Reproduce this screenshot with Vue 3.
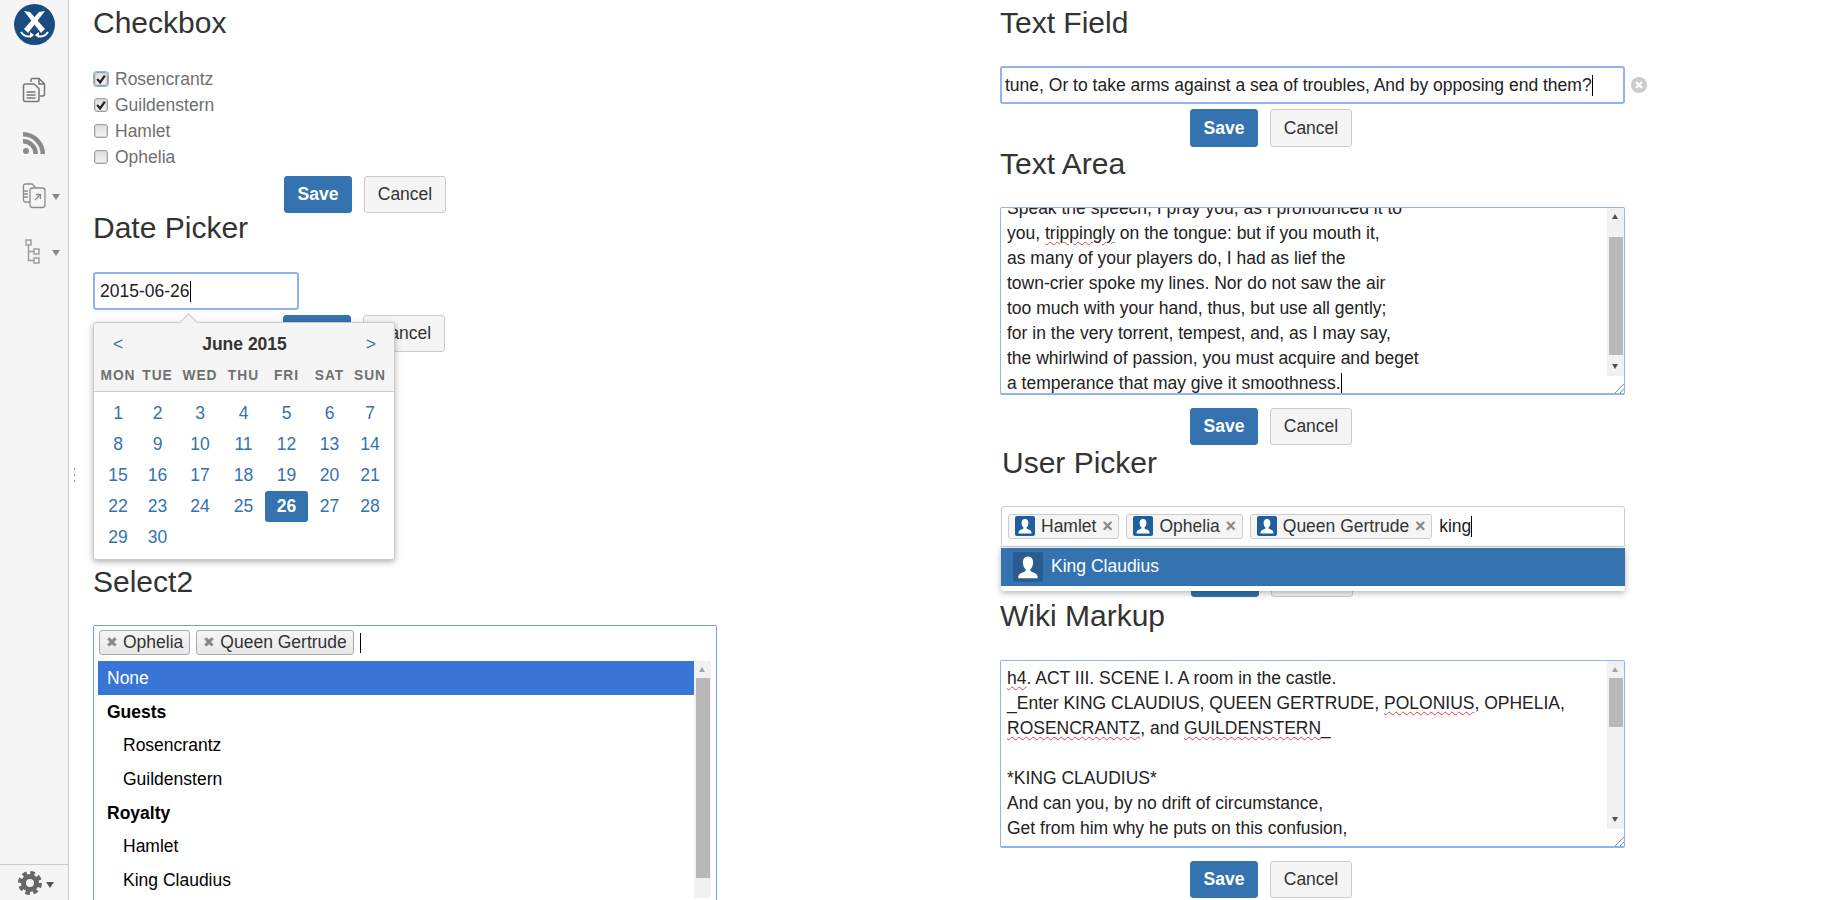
<script setup>
const checks = [
  { label: 'Rosencrantz', on: true, focus: true },
  { label: 'Guildenstern', on: true },
  { label: 'Hamlet', on: false },
  { label: 'Ophelia', on: false }
]
const weekdays = ['MON', 'TUE', 'WED', 'THU', 'FRI', 'SAT', 'SUN']
const days = Array.from({ length: 30 }, (_, i) => i + 1)
const results = [
  { text: 'None', kind: 'active' },
  { text: 'Guests', kind: 'group' },
  { text: 'Rosencrantz', kind: 'child' },
  { text: 'Guildenstern', kind: 'child' },
  { text: 'Royalty', kind: 'group' },
  { text: 'Hamlet', kind: 'child' },
  { text: 'King Claudius', kind: 'child' }
]
const users = ['Hamlet', 'Ophelia', 'Queen Gertrude']
</script>

<template>
  <div class="page">
    <aside class="sidebar">
      <svg class="logo" viewBox="0 0 41 41" width="41" height="41">
        <circle cx="20.5" cy="20.5" r="20.5" fill="#1a4c7f" />
        <path d="M10 7 L16 8 L31 25 L27 29 Z" fill="#fff" />
        <path d="M31 7 L25 8 L10 25 L14 29 Z" fill="#fff" />
        <path d="M7 28 Q12 35 19 31 M34 28 Q29 35 22 31" fill="none" stroke="#fff" stroke-width="2" />
        <path d="M16 28 L20 31 L16 34 Z M25 28 L21 31 L25 34 Z" fill="#fff" />
      </svg>
      <div class="side-icons">
        <div class="side-item">
          <svg viewBox="0 0 24 26" width="24" height="26" fill="none" stroke="#777" stroke-width="1.5">
            <path d="M9 5 V3 Q9 1.5 10.5 1.5 H17 L22.5 7 V17 Q22.5 19 20.5 19 H18" />
            <path d="M17 1.5 V7 H22.5" />
            <path d="M3.5 7 H12 L17 11.5 V22.5 Q17 24.5 15 24.5 H3.5 Q1.5 24.5 1.5 22.5 V9 Q1.5 7 3.5 7 Z" />
            <path d="M4.5 15 H13.5 M4.5 18 H13.5 M4.5 21 H13.5" />
          </svg>
        </div>
        <div class="side-item">
          <svg viewBox="0 0 24 24" width="24" height="24" fill="#8a8a8a">
            <circle cx="4" cy="20" r="3" />
            <path d="M1 8 V12.5 A10.5 10.5 0 0 1 11.5 23 H16 A15 15 0 0 0 1 8 Z" />
            <path d="M1 1 V5.5 A17.5 17.5 0 0 1 18.5 23 H23 A22 22 0 0 0 1 1 Z" />
          </svg>
        </div>
        <div class="side-item caret-item">
          <svg viewBox="0 0 24 26" width="24" height="26" fill="none" stroke="#8c8c8c" stroke-width="1.3">
            <path d="M8 19 H3.5 Q1.5 19 1.5 17 V3 Q1.5 1 3.5 1 H10 L14 5" />
            <path d="M2 8 H6 M2 11 H6 M2 14 H6" />
            <rect x="8" y="5" width="15" height="19.5" rx="2.5" fill="#f5f5f5" />
            <path d="M13 17 L18 12 M14 11.5 H18.5 V16" />
          </svg>
          <i class="tri"></i>
        </div>
        <div class="side-item caret-item">
          <svg viewBox="0 0 24 26" width="24" height="26" fill="none" stroke="#999" stroke-width="1.4">
            <rect x="4" y="1" width="5" height="5" />
            <rect x="12" y="10" width="5" height="5" />
            <rect x="12" y="19" width="5" height="5" />
            <path d="M6.5 6 V21.5 H12 M6.5 12.5 H12" />
          </svg>
          <i class="tri"></i>
        </div>
      </div>
      <div class="side-foot">
        <svg viewBox="0 0 24 24" width="24" height="24">
          <circle cx="12" cy="12" r="10" fill="none" stroke="#666" stroke-width="4" stroke-dasharray="4.5 3.35" />
          <circle cx="12" cy="12" r="6.5" fill="#f5f5f5" stroke="#666" stroke-width="5" />
        </svg>
        <i class="tri dark"></i>
      </div>
    </aside>

    <main class="columns">
      <section class="col col-left">
        <h3>Checkbox</h3>
        <div class="checks">
          <label v-for="c in checks" :key="c.label" class="check">
            <span class="box" :class="{ focused: c.focus }">
              <svg v-if="c.on" viewBox="0 0 14 14" width="12" height="12">
                <path d="M2.500 7 L6 11 L11.500 3" fill="none" stroke="#222" stroke-width="2.6" />
              </svg>
            </span>
            {{ c.label }}
          </label>
        </div>
        <div class="actions tight">
          <button class="save">Save</button><button class="cancel">Cancel</button>
        </div>

        <h3 class="after-tight">Date Picker</h3>
        <div class="date-wrap">
          <div class="field date">2015-06-26<span class="caret"></span></div>
          <div class="calendar">
            <i class="cal-arrow"></i>
            <div class="cal-head">
              <div class="cal-title">
                <span class="nav">&lt;</span>
                <strong>June 2015</strong>
                <span class="nav">&gt;</span>
              </div>
              <div class="cal-grid cal-week">
                <span v-for="w in weekdays" :key="w">{{ w }}</span>
              </div>
            </div>
            <div class="cal-grid cal-days">
              <span v-for="d in days" :key="d" class="day" :class="{ picked: d === 26 }">{{ d }}</span>
            </div>
          </div>
        </div>
        <div class="actions date-actions">
          <button class="save">Save</button><button class="cancel">Cancel</button>
        </div>

        <h3 class="select-title">Select2</h3>
        <div class="select-box">
          <div class="select-pills">
            <span class="pill"><b class="pill-x">✖</b>Ophelia</span>
            <span class="pill"><b class="pill-x">✖</b>Queen Gertrude</span>
            <span class="caret tall"></span>
          </div>
          <div class="select-results">
            <ul class="result-list">
              <li v-for="r in results" :key="r.text" :class="r.kind">{{ r.text }}</li>
            </ul>
            <div class="scrollbar">
              <i class="sb-up"></i>
              <i class="thumb thumb-select"></i>
            </div>
          </div>
        </div>
      </section>

      <section class="col col-right">
        <h3>Text Field</h3>
        <div class="text-row">
          <div class="field text-input">tune, Or to take arms against a sea of troubles, And by opposing end them?<span class="caret"></span></div>
          <svg class="clear" viewBox="0 0 16 16" width="16" height="16">
            <circle cx="8" cy="8" r="8" fill="#ccc" />
            <path d="M5 5 L11 11 M11 5 L5 11" stroke="#fff" stroke-width="2.4" />
          </svg>
        </div>
        <div class="actions tight">
          <button class="save">Save</button><button class="cancel">Cancel</button>
        </div>

        <h3>Text Area</h3>
        <div class="area">
          <div class="area-text area-scrolled">
            <div>Speak the speech, I pray you, as I pronounced it to</div>
            <div>you, <span class="typo">trippingly</span> on the tongue: but if you mouth it,</div>
            <div>as many of your players do, I had as lief the</div>
            <div>town-crier spoke my lines. Nor do not saw the air</div>
            <div>too much with your hand, thus, but use all gently;</div>
            <div>for in the very torrent, tempest, and, as I may say,</div>
            <div>the whirlwind of passion, you must acquire and beget</div>
            <div>a temperance that may give it smoothness.<span class="caret"></span></div>
          </div>
          <div class="scrollbar">
            <i class="sb-up"></i>
            <div class="sb-track"><i class="thumb thumb-area"></i></div>
            <i class="sb-down"></i>
            <i class="resizer"></i>
          </div>
        </div>
        <div class="actions area-actions">
          <button class="save">Save</button><button class="cancel">Cancel</button>
        </div>

        <h3 class="user-title">User Picker</h3>
        <div class="user-wrap">
          <div class="user-box">
            <span v-for="u in users" :key="u" class="user-pill">
              <svg class="avatar" viewBox="0 0 20 20" width="20" height="20">
                <rect width="20" height="20" rx="2" fill="#205f9e" />
                <path d="M10 3 C12.5 3 13.6 5 13.4 7.5 C13.2 9.8 12.2 11 11.5 11.6 C11.5 12.6 12 13 13.5 13.6 C15.5 14.3 16.5 15 16.5 17.5 H3.5 C3.5 15 4.5 14.3 6.500 13.6 C8 13 8.5 12.600 8.5 11.6 C7.800 11 6.800 9.800 6.600 7.500 C6.400 5 7.500 3 10 3 Z" fill="#fff" />
              </svg>
              <span>{{ u }}</span>
              <b class="user-x">×</b>
            </span>
            <span class="typed">king<span class="caret"></span></span>
          </div>
          <div class="user-drop">
            <div class="user-option">
              <svg class="avatar" viewBox="0 0 20 20" width="30" height="30">
                <rect width="20" height="20" rx="1.500" fill="#2a5c8f" />
                <path d="M10 3 C12.5 3 13.6 5 13.4 7.5 C13.2 9.8 12.2 11 11.5 11.6 C11.5 12.6 12 13 13.5 13.6 C15.5 14.3 16.5 15 16.5 17.5 H3.5 C3.5 15 4.5 14.3 6.500 13.6 C8 13 8.5 12.600 8.5 11.6 C7.800 11 6.800 9.800 6.600 7.500 C6.400 5 7.500 3 10 3 Z" fill="#fff" />
              </svg>
              <span class="option-name">King Claudius</span>
            </div>
          </div>
        </div>
        <div class="actions user-actions">
          <button class="save">Save</button><button class="cancel">Cancel</button>
        </div>

        <h3 class="after-user">Wiki Markup</h3>
        <div class="area wiki">
          <div class="area-text wiki-text">
            <div><span class="typo">h4</span>. ACT III. SCENE I. A room in the castle.</div>
            <div>_Enter KING CLAUDIUS, QUEEN GERTRUDE, <span class="typo">POLONIUS</span>, OPHELIA,</div>
            <div><span class="typo">ROSENCRANTZ</span>, and <span class="typo">GUILDENSTERN</span>_</div>
            <div>&nbsp;</div>
            <div>*KING CLAUDIUS*</div>
            <div>And can you, by no drift of circumstance,</div>
            <div>Get from him why he puts on this confusion,</div>
          </div>
          <div class="scrollbar">
            <i class="sb-up"></i>
            <div class="sb-track"><i class="thumb thumb-wiki"></i></div>
            <i class="sb-down"></i>
            <i class="resizer"></i>
          </div>
        </div>
        <div class="actions wiki-actions">
          <button class="save">Save</button><button class="cancel">Cancel</button>
        </div>
      </section>
    </main>
    <i class="drag-handle"></i>
  </div>
</template>

<style>
html, body { margin: 0; height: 100%; overflow: hidden; background: #fff; }
</style>

<style scoped>
.page {
  position: relative;
  display: flex;
  height: 900px;
  overflow: hidden;
  font: 17.5px/25px "Liberation Sans", Arial, sans-serif;
  color: #333;
  background: #fff;
}
.sidebar {
  box-sizing: border-box;
  flex: 0 0 69px;
  height: 900px;
  display: flex;
  flex-direction: column;
  background: #f5f5f5;
  border-right: 1px solid #ccc;
}
.logo { display: block; margin: 4px 0 0 14px; }
.side-icons { flex: 1; display: flex; flex-direction: column; padding-top: 32px; }
.side-item { display: flex; align-items: center; height: 26px; margin-bottom: 27px; padding-left: 22px; }
.caret-item { margin-bottom: 30px; }
.tri {
  display: block;
  width: 0;
  height: 0;
  margin: 2px 0 0 6px;
  border: 4px solid transparent;
  border-top: 6px solid #888;
  border-bottom: 0;
}
.tri.dark { border-top-color: #555; margin: 4px 0 0 4px; }
.side-foot { display: flex; align-items: center; height: 35px; border-top: 1px solid #ccc; padding-left: 18px; margin-right: 0; }

.columns { flex: 1; display: grid; grid-template-columns: 931px 1fr; align-items: start; }
.col { display: flex; flex-direction: column; }
.col-left { padding: 6px 0 0 24px; }
.col-right { padding: 6px 0 0 0; }
h3 { margin: 0; font: 400 30px/33px "Liberation Sans", Arial, sans-serif; color: #333; }

.checks { margin-top: 27px; display: flex; flex-direction: column; }
.check { display: flex; align-items: center; height: 26px; color: #707070; padding-left: 1px; }
.box {
  box-sizing: border-box;
  flex: 0 0 14px;
  height: 14px;
  margin-right: 7px;
  border: 1px solid #a0a0a0;
  border-radius: 3px;
  background: linear-gradient(#dedede, #f4f4f4);
  box-shadow: inset 0 0 0 1px #d4d4d4;
  display: flex;
  align-items: center;
  justify-content: center;
}
.box svg { flex: none; }
.box.focused { box-shadow: 0 0 0 1px #8fb4ee, inset 0 0 0 1px #d4d4d4; }

.actions { display: flex; gap: 12px; padding-left: 191px; height: 37px; }
.tight { margin-top: 6px; }
.col-right .tight { margin-top: 5px; height: 38px; }
.save, .cancel {
  box-sizing: border-box;
  height: 100%;
  margin: 0;
  border-radius: 3px;
  font: 17.5px/25px "Liberation Sans", Arial, sans-serif;
  padding: 0;
}
.save { width: 68px; background: #3572b0; border: 1px solid #3572b0; color: #fff; font-weight: 700; }
.cancel { width: 82px; background: #f5f5f5; border: 1px solid #ccc; color: #333; }
.after-tight { margin-top: -2px; }

.field {
  box-sizing: border-box;
  height: 38px;
  border: 2px solid #8fb4ee;
  border-radius: 3px;
  background: #fff;
  color: #222;
  line-height: 34px;
  white-space: nowrap;
  overflow: hidden;
}
.caret { display: inline-block; width: 1px; height: 21px; background: #000; vertical-align: -5px; }
.date-wrap { position: relative; margin-top: 28px; }
.date { width: 206px; padding-left: 5px; }
.date-actions { margin-top: 5px; padding-left: 190px; }
.calendar {
  box-sizing: border-box;
  position: absolute;
  z-index: 2;
  left: 0;
  top: 50px;
  width: 302px;
  height: 238px;
  background: #fff;
  border: 1px solid #ccc;
  border-radius: 3px;
  box-shadow: 0 2px 6px rgba(0, 0, 0, 0.3);
}
.cal-arrow {
  position: absolute;
  left: 88px;
  top: -7px;
  width: 12px;
  height: 12px;
  background: #f5f5f5;
  border: 1px solid #ccc;
  border-right: 0;
  border-bottom: 0;
  transform: rotate(45deg);
}
.cal-head {
  position: relative;
  height: 68px;
  background: #f5f5f5;
  border-bottom: 1px solid #ccc;
  border-radius: 3px 3px 0 0;
}
.cal-title {
  display: flex;
  justify-content: space-between;
  align-items: center;
  height: 41px;
  padding: 2px 15px 0 16px;
  box-sizing: border-box;
}
.cal-title strong { color: #333; font-weight: 700; }
.nav { color: #3572b0; width: 16px; text-align: center; }
.cal-grid {
  display: grid;
  grid-template-columns: 38px 41px 44px 43px 43px 43px 38px;
  padding-left: 5px;
  text-align: center;
}
.cal-week { font-size: 13.75px; font-weight: 700; color: #707070; letter-spacing: 1px; line-height: 24px; }
.cal-days { margin-top: 6px; grid-auto-rows: 31px; line-height: 31px; }
.day { color: #3572b0; border-radius: 3px; }
.day.picked { background: #3572b0; color: #fff; font-weight: 700; }

.select-title { margin-top: 213px; }
.select-box {
  box-sizing: border-box;
  width: 624px;
  height: 300px;
  margin-top: 27px;
  padding: 4px 5px 0 4px;
  border: 1px solid #6c9ff0;
  border-radius: 2px;
  background: #fff;
}
.select-pills { display: flex; align-items: center; gap: 6px; height: 25px; padding-left: 1px; }
.pill {
  box-sizing: border-box;
  display: flex;
  align-items: center;
  height: 25px;
  padding: 0 6px 0 5px;
  border: 1px solid #aaa;
  border-radius: 3px;
  background: linear-gradient(#f6f6f6, #e8e8e8);
  color: #333;
}
.pill-x { width: 13px; margin-right: 5px; color: #888; font-size: 14px; font-weight: 400; text-align: center; }
.caret.tall { height: 20px; margin-left: 0; }
.select-results { display: flex; margin-top: 6px; }
.result-list { flex: 1; margin: 0; padding: 0; list-style: none; color: #000; }
.result-list li { height: 33.75px; line-height: 33px; padding-left: 9px; }
.result-list .active { background: #3875d7; color: #fff; height: 34px; line-height: 34px; }
.result-list .group { font-weight: 700; line-height: 34px; }
.result-list .child { padding-left: 25px; }

.scrollbar { flex: 0 0 17px; display: flex; flex-direction: column; align-items: center; background: #f1f1f1; }
.sb-up, .sb-down { flex: 0 0 18px; position: relative; width: 17px; }
.sb-up::after, .sb-down::after {
  content: "";
  position: absolute;
  left: 5px;
  top: 6px;
  border: 3.5px solid transparent;
}
.sb-up::after { border-top: 0; border-bottom: 5px solid #505050; }
.sb-down::after { border-bottom: 0; border-top: 5px solid #505050; }
.select-results .sb-up::after { border-bottom-color: #a3a3a3; }
.wiki .sb-up::after { border-bottom-color: #a3a3a3; }
.sb-track { flex: 1; width: 100%; }
.thumb { display: block; width: 14px; background: #b8b8b8; margin: 0 auto; }
.thumb-select { height: 200px; margin-top: -1px; }
.thumb-area { height: 118px; margin-top: 11px; }
.thumb-wiki { height: 49px; margin-top: -1px; }
.resizer {
  flex: 0 0 17px;
  width: 100%;
  background: #fff linear-gradient(135deg, transparent 72%, #888 72%, #888 76%, transparent 76%, transparent 86%, #888 86%, #888 90%, transparent 90%);
}

.text-row { display: flex; align-items: center; gap: 6px; margin-top: 27px; }
.text-input { width: 625px; padding-left: 3px; }
.clear { flex: none; }

.area {
  box-sizing: border-box;
  display: flex;
  width: 625px;
  height: 188px;
  margin-top: 27px;
  border: 1px solid #8fb4ee;
  border-bottom-width: 2px;
  border-radius: 2px;
  overflow: hidden;
  background: #fff;
}
.area-text { flex: 1; padding-left: 6px; color: #222; white-space: nowrap; overflow: hidden; }
.area-scrolled { padding-top: 0; }
.area-scrolled > div:first-child { margin-top: -12px; }
.wiki-text { padding-top: 5px; }
.typo { text-decoration: underline wavy #e0454a 1px; text-underline-offset: 2px; }
.area-actions { margin-top: 13px; padding-left: 190px; }
.col-right .actions { padding-left: 190px; }

.user-title { margin: 1px 0 0 2px; }
.user-wrap { position: relative; margin: 27px 0 0 1px; width: 624px; }
.user-box {
  box-sizing: border-box;
  display: flex;
  align-items: center;
  gap: 7px;
  height: 41px;
  padding: 0 0 1px 6px;
  border: 1px solid #ccc;
  border-radius: 3px 3px 0 0;
  background: #fff;
}
.user-pill {
  box-sizing: border-box;
  display: flex;
  align-items: center;
  height: 25px;
  padding: 0 5px 0 6px;
  background: #f5f5f5;
  border: 1px solid #ccc;
  border-radius: 3px;
  color: #333;
}
.avatar { flex: none; }
.user-pill .avatar { margin-right: 6px; }
.user-x { width: 12px; margin-left: 5px; color: #888; font-size: 18px; font-weight: 700; text-align: center; }
.typed { margin-left: 0; color: #222; }
.user-drop {
  position: absolute;
  z-index: 2;
  left: 0;
  right: 0;
  top: 42px;
  height: 43px;
  background: #fff;
  box-shadow: 0 2px 6px rgba(0, 0, 0, 0.3);
  border-radius: 0 0 3px 3px;
}
.user-option {
  box-sizing: border-box;
  display: flex;
  align-items: center;
  gap: 8px;
  height: 38px;
  padding-left: 12px;
  background: #3572b0;
  color: #fff;
}
.option-name { margin-top: -2px; }
.user-actions { margin-top: 13px; padding-left: 191px !important; }
.after-user { margin-top: 2px; }
.wiki { margin-top: 28px; }
.wiki-actions { margin-top: 13px; }
.drag-handle {
  position: absolute;
  left: 74px;
  top: 468px;
  width: 1px;
  height: 16px;
  background: repeating-linear-gradient(#aaa 0 2px, transparent 2px 6px);
}
</style>
